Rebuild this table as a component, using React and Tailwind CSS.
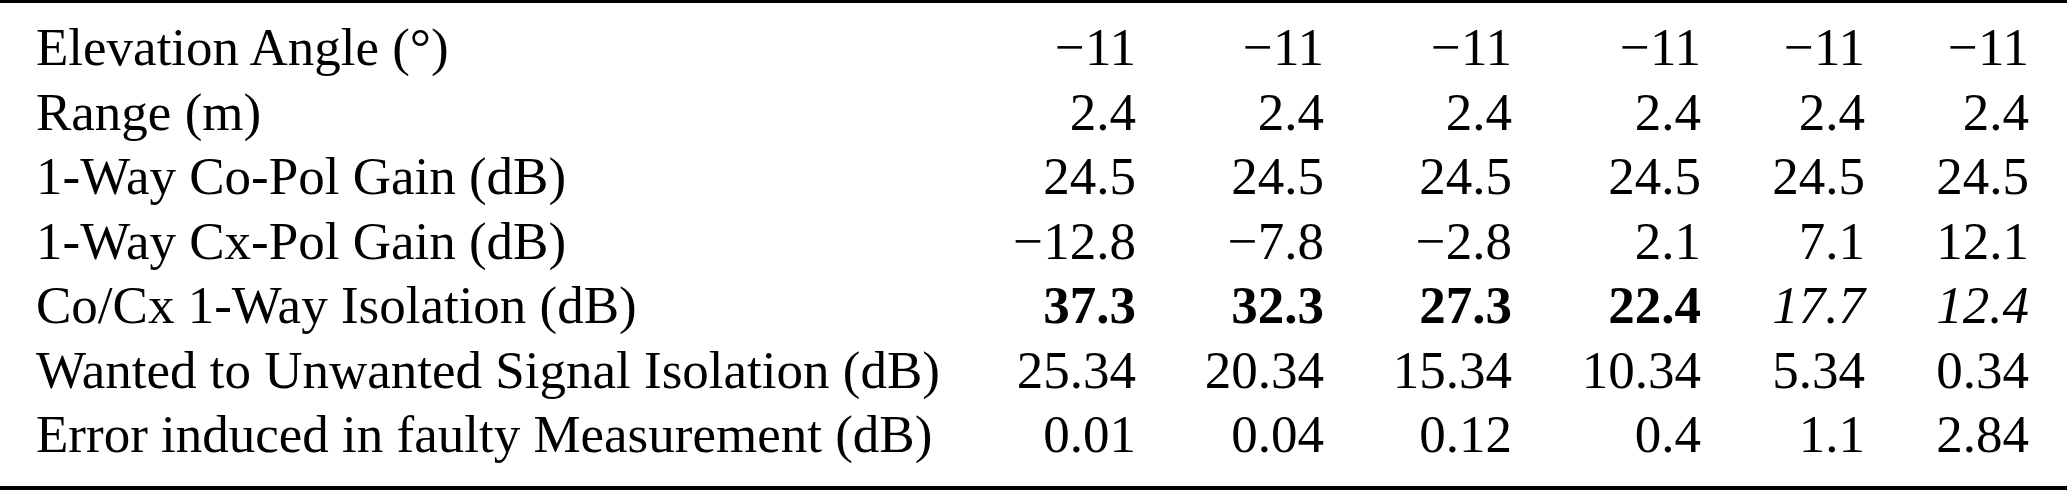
import React from 'react'

const rows = [
  { label: 'Elevation Angle (°)', values: ['−11', '−11', '−11', '−11', '−11', '−11'] },
  { label: 'Range (m)', values: ['2.4', '2.4', '2.4', '2.4', '2.4', '2.4'] },
  { label: '1-Way Co-Pol Gain (dB)', values: ['24.5', '24.5', '24.5', '24.5', '24.5', '24.5'] },
  { label: '1-Way Cx-Pol Gain (dB)', values: ['−12.8', '−7.8', '−2.8', '2.1', '7.1', '12.1'] },
  {
    label: 'Co/Cx 1-Way Isolation (dB)',
    values: ['37.3', '32.3', '27.3', '22.4', '17.7', '12.4'],
    // first four pass, last two are marginal
    styles: ['bold', 'bold', 'bold', 'bold', 'italic', 'italic'],
  },
  { label: 'Wanted to Unwanted Signal Isolation (dB)', values: ['25.34', '20.34', '15.34', '10.34', '5.34', '0.34'] },
  { label: 'Error induced in faulty Measurement (dB)', values: ['0.01', '0.04', '0.12', '0.4', '1.1', '2.84'] },
]

export default function App() {
  return (
    <div
      className="w-[2067px] h-[490px] bg-white text-black overflow-hidden"
      style={{ fontFamily: '"Liberation Serif", "Times New Roman", serif' }}
    >
      <div className="border-t-[3px] border-b-[4px] border-black pt-[12px] pb-[19px]">
        {rows.map((row) => (
          <Row key={row.label} row={row} />
        ))}
      </div>
    </div>
  )
}

function Row({ row }) {
  return (
    <div className="grid grid-cols-[944px_192px_188px_188px_189px_164px_164px] h-[64.5px] text-[53px] leading-[64.5px] whitespace-nowrap">
      <div className="pl-[36px]">{row.label}</div>
      {row.values.map((v, i) => {
        const style = row.styles ? row.styles[i] : null
        return (
          <div
            key={i}
            className={`text-right ${
              style === 'bold' ? 'font-bold' : style === 'italic' ? 'italic' : ''
            }`}
          >
            {v}
          </div>
        )
      })}
    </div>
  )
}
